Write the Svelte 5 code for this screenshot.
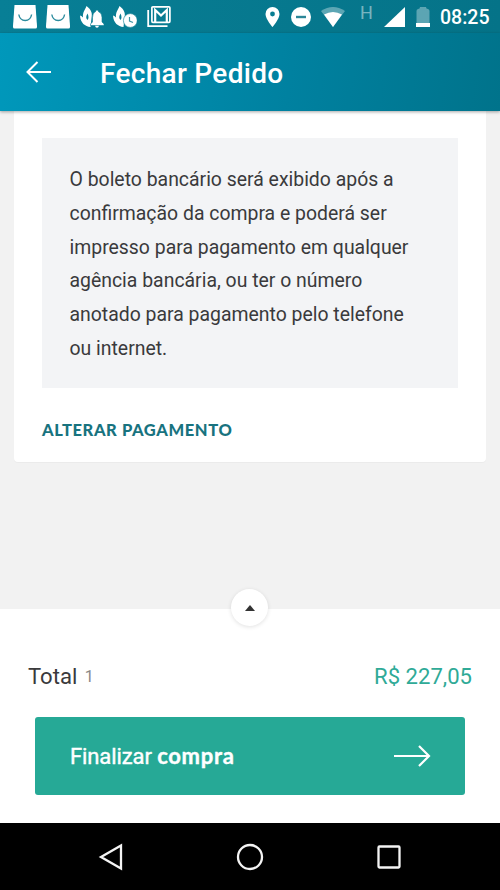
<script lang="ts">
  const title = 'Fechar Pedido';
  const clock = '08:25';
  const total = 'R$ 227,05';
  const installments = 1;

  const notice = [
    'O boleto bancário será exibido após a',
    'confirmação da compra e poderá ser',
    'impresso para pagamento em qualquer',
    'agência bancária, ou ter o número',
    'anotado para pagamento pelo telefone',
    'ou internet.'
  ];
</script>

<div class="screen">
  <div class="status-bar">
    <div class="notifications">
      {#each [0, 1] as bag (bag)}
        <svg width="24" height="24" viewBox="0 0 24 24" aria-hidden="true">
          <path d="M1.500 0h21L24 21v1q0 1.500-1.500 1.500h-21Q0 23.500 0 22v-1z" fill="#fff" />
          <path d="M5.800 9.500q1 6 6.400 6t6.400-6" fill="none" stroke="#2c8c9e" stroke-width="1.400" />
        </svg>
      {/each}

      <!-- Flame with bell -->
      <svg width="24" height="24" viewBox="0 0 24 24" aria-hidden="true">
        <path d="M6.500 1c5 4 6 7 5 12l-1 9C5 21.500.500 18 0 10.500q2 .5 3 2C2.500 7 5 5 6.500 1z" fill="#fff" />
        <path d="M7.500 8.500q-2.500 4.500 0 6.500 2-2.500 0-6.500z" fill="#087d92" />
        <path d="M17 5q1.500 0 1.500 1.700 3.500 1.200 3.500 5.800v4.500l2 2v1.500H10.500V19l2-2v-4.500q0-4.600 3-5.800Q15.500 5 17 5z" fill="#fff" stroke="#087d92" stroke-width=".6" />
        <path d="M15 20.700h4q-.5 2-2 2t-2-2z" fill="#fff" />
      </svg>

      <!-- Flame with clock -->
      <svg width="24" height="24" viewBox="0 0 24 24" aria-hidden="true">
        <path d="M6.500 1c5 4 6 7 5 12l-1 9C5 21.500.500 18 0 10.500q2 .5 3 2C2.500 7 5 5 6.500 1z" fill="#fff" />
        <path d="M7.500 8.500q-2.500 4.500 0 6.500 2-2.500 0-6.500z" fill="#087d92" />
        <circle cx="17.300" cy="15.500" r="6.900" fill="#fff" stroke="#087d92" stroke-width=".6" />
        <path d="M16.500 12v4l3.500 1.500" fill="none" stroke="#3d95a5" stroke-width="1.200" />
      </svg>

      <!-- Stacked mail -->
      <svg width="24" height="24" viewBox="0 0 24 24" aria-hidden="true">
        <path d="M1.200 5v16.200H20.500" fill="none" stroke="#fff" stroke-width="1.800" />
        <rect x="4.900" y="1.800" width="18" height="15.500" rx="1" fill="none" stroke="#fff" stroke-width="1.700" />
        <path d="M8.200 17V5l5.800 5.500L19.800 5v12" fill="none" stroke="#fff" stroke-width="2.200" />
      </svg>
    </div>

    <div class="system">
      <svg class="pin" width="15" height="20" viewBox="0 0 15 20" aria-hidden="true">
        <path d="M7.500 0A7 7 0 0 1 14.500 7c0 5-7 13-7 13S.5 12 .5 7A7 7 0 0 1 7.500 0z" fill="#fff" />
        <circle cx="7.500" cy="7" r="2.400" fill="#087d92" />
      </svg>
      <svg class="dnd" width="20" height="20" viewBox="0 0 20 20" aria-hidden="true">
        <circle cx="10" cy="10" r="10" fill="#fff" />
        <path d="M5 10h10" stroke="#2c8798" stroke-width="2.400" />
      </svg>
      <svg class="wifi" width="26" height="20" viewBox="0 0 26 20" aria-hidden="true">
        <path d="M1 4q12-8 24 0L13 20z" fill="#fff" opacity=".35" />
        <path d="M4 7.500q9-5 18 0L13 20z" fill="#fff" />
      </svg>
      <span class="network">H</span>
      <svg class="signal" width="21" height="20" viewBox="0 0 21 20" aria-hidden="true">
        <path d="M0 20 21 0v20z" fill="#fff" />
      </svg>
      <svg class="battery" width="14" height="20" viewBox="0 0 14 20" aria-hidden="true">
        <path d="M4 0h6q0 2 2 2 1.500.5 1.500 2v12H.500V4q0-1.500 1.500-2 2 0 2-2z" fill="#fff" opacity=".35" />
        <path d="M0 16h14v4H0z" fill="#fff" />
      </svg>
      <span class="clock">{clock}</span>
    </div>
  </div>

  <header class="app-bar">
    <button class="back" aria-label="Voltar">
      <svg width="26" height="22" viewBox="0 0 26 22" aria-hidden="true">
        <path d="M25 11H1.500M11.500 1 1.500 11l10 10" fill="none" stroke="currentColor" stroke-width="2" />
      </svg>
    </button>
    <h1>{title}</h1>
  </header>

  <main>
    <section class="card">
      <p class="notice">
        {#each notice as line}
          <span>{line}</span>
        {/each}
      </p>
      <button class="change">ALTERAR PAGAMENTO</button>
    </section>
  </main>

  <section class="summary">
    <button class="expand" aria-label="Expandir resumo">
      <svg width="10" height="6" viewBox="0 0 10 6" aria-hidden="true">
        <path d="M0 6 5 0l5 6z" fill="#333" />
      </svg>
    </button>
    <div class="total-row">
      <span class="label">Total <small>{installments}</small></span>
      <span class="amount">{total}</span>
    </div>
    <button class="checkout">
      <span>Finalizar <b>compra</b></span>
      <svg width="38" height="22" viewBox="0 0 38 22" aria-hidden="true">
        <path d="M1 11h35M26 1l10 10-10 10" fill="none" stroke="currentColor" stroke-width="2.200" />
      </svg>
    </button>
  </section>

  <nav class="nav-bar">
    <svg width="28" height="28" viewBox="0 0 28 28" aria-hidden="true">
      <path d="M24 2.500v23L4 14z" />
    </svg>
    <svg width="28" height="28" viewBox="0 0 28 28" aria-hidden="true">
      <circle cx="14" cy="14" r="12" />
    </svg>
    <svg width="28" height="28" viewBox="0 0 28 28" aria-hidden="true">
      <rect x="3.500" y="3.500" width="21" height="21" rx="1" />
    </svg>
  </nav>
</div>

<style>
  :global(body) {
    margin: 0;
  }

  .screen {
    display: flex;
    flex-direction: column;
    width: 500px;
    height: 890px;
    overflow: hidden;
    background: #f2f2f2;
    font-family: Roboto, sans-serif;
    color: #3a3a3c;
  }

  button {
    padding: 0;
    border: 0;
    background: none;
    font: inherit;
    color: inherit;
  }

  svg {
    display: block;
    flex-shrink: 0;
  }

  .status-bar {
    display: flex;
    justify-content: space-between;
    box-sizing: border-box;
    height: 33px;
    padding: 5px 11px 0 13px;
    background: linear-gradient(90deg, #087f96, #057388);
    color: #fff;
  }

  .notifications {
    display: flex;
    gap: 9.4px;
  }

  .system {
    display: flex;
    align-items: flex-start;
    padding-top: 2px;
  }

  .dnd {
    margin-left: 11px;
  }

  .wifi {
    margin-left: 9px;
  }

  .network {
    width: 12px;
    margin: -4px 0 0 14px;
    font-size: 18px;
    line-height: 20px;
    opacity: 0.45;
  }

  .signal {
    margin-left: 12px;
  }

  .battery {
    margin-left: 11px;
  }

  .clock {
    width: 49px;
    margin-left: 10px;
    font-size: 19.5px;
    font-weight: 500;
    line-height: 22px;
    white-space: nowrap;
  }

  .app-bar {
    display: flex;
    align-items: center;
    position: relative;
    height: 78px;
    padding-left: 26px;
    background: linear-gradient(98deg, #0098bb, #0081a0 58%, #00738b);
    box-shadow: 0 1px 3px rgb(0 0 0 / 0.35);
    color: #fff;
  }

  h1 {
    margin: 3px 0 0 48px;
    font-size: 28px;
    font-weight: 500;
    letter-spacing: 0.3px;
    line-height: 32px;
  }

  main {
    flex: 1;
    padding: 0 14px;
  }

  .card {
    box-sizing: border-box;
    height: 351px;
    padding: 27px 28px 0;
    border-radius: 0 0 4px 4px;
    background: #fff;
    box-shadow: 0 1px 1px rgb(0 0 0 / 0.03);
  }

  .notice {
    box-sizing: border-box;
    height: 250px;
    margin: 0;
    padding: 25px 28px 0 27.5px;
    background: #f3f4f6;
    font-size: 19.42px;
    line-height: 33.8px;
    white-space: nowrap;
  }

  .notice span {
    display: block;
  }

  .change {
    display: block;
    margin-top: 31px;
    font-family: Lato, sans-serif;
    font-size: 16.5px;
    font-weight: 900;
    letter-spacing: 0.6px;
    line-height: 22px;
    color: #18737f;
    white-space: nowrap;
  }

  .summary {
    position: relative;
    box-sizing: border-box;
    height: 214px;
    padding: 51px 28px 0;
    background: #fff;
  }

  .expand {
    display: flex;
    align-items: center;
    justify-content: center;
    position: absolute;
    top: -20px;
    left: 231px;
    width: 37px;
    height: 37px;
    border-radius: 50%;
    background: #fff;
    box-shadow: 0 1px 4px rgb(0 0 0 / 0.12);
  }

  .total-row {
    display: flex;
    justify-content: space-between;
    height: 32px;
    font-size: 22.1px;
    line-height: 32px;
  }

  small {
    margin-left: 2px;
    font-size: 16px;
    vertical-align: 2px;
    line-height: 1;
    color: #888;
  }

  .amount {
    color: #2faa97;
  }

  .checkout {
    display: flex;
    align-items: center;
    justify-content: space-between;
    box-sizing: border-box;
    width: 430px;
    height: 78px;
    margin: 25px 0 0 7px;
    padding: 0 34px 0 35px;
    border-radius: 3px;
    background: #26a996;
    font-size: 22px;
    color: #fff;
  }

  .checkout span {
    margin-top: -2px;
    letter-spacing: -0.1px;
    -webkit-text-stroke: 0.4px #fff;
  }

  .checkout b {
    font-family: Lato, sans-serif;
    font-weight: 700;
    letter-spacing: 0.7px;
  }

  .nav-bar {
    display: flex;
    align-items: center;
    justify-content: center;
    gap: 111px;
    height: 67px;
    background: #000;
  }

  .nav-bar svg {
    fill: none;
    stroke: #f4f4f4;
    stroke-width: 2.3;
  }
</style>
